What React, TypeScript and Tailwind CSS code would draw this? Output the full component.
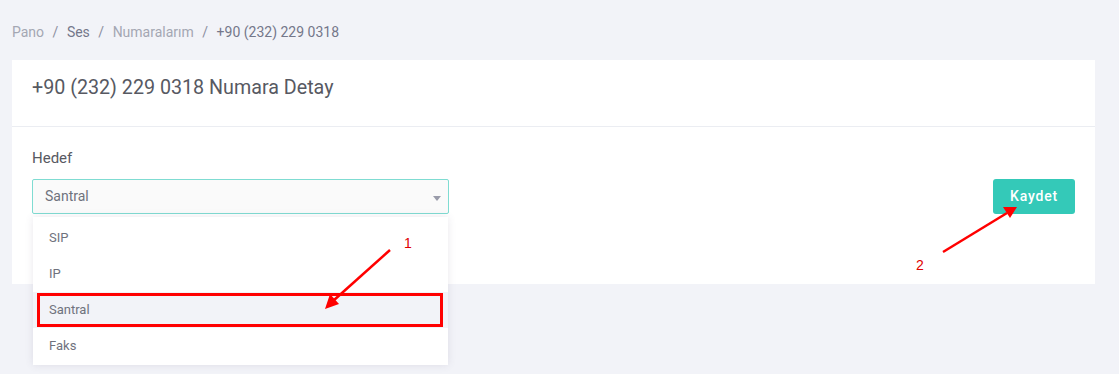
const options = ["SIP", "IP", "Santral", "Faks"];

export default function App() {
  return (
    <div className="relative min-h-[374px] bg-[#f2f3f8] pl-[12px] pr-[24px] font-['Roboto',sans-serif]">
      {/* Breadcrumb */}
      <div className="flex items-center pt-[23px] text-[14px] leading-[18px]">
        <span className="text-[#a4a7b3]">Pano</span>
        <span className="mx-[8.5px] text-[#8c8fa0]">/</span>
        <span className="text-[#74778a]">Ses</span>
        <span className="mx-[8.5px] text-[#8c8fa0]">/</span>
        <span className="text-[#a4a7b3]">Numaralarım</span>
        <span className="mx-[8.5px] text-[#8c8fa0]">/</span>
        <span className="text-[#74778a]">+90 (232) 229 0318</span>
      </div>

      {/* Card */}
      <div className="mt-[19px] bg-white">
        <div className="h-[67px] border-b border-[#ebedf2] px-[20px] pt-[16px]">
          <h3 className="text-[19.7px] leading-[24px] font-normal text-[#575962]">
            +90 (232) 229 0318 Numara Detay
          </h3>
        </div>

        <div className="flex items-start justify-between px-[20px] pt-[21px] pb-[70px]">
          <div className="relative">
            <label className="block text-[15px] leading-[20px] text-[#575962]">Hedef</label>
            <div className="relative mt-[11px] flex h-[35px] w-[417px] items-center rounded-[2px] border border-[#7fdcd2] bg-[#fafafa] px-[12px] text-[14px] text-[#6f727d]">
              Santral
              <span className="absolute right-[7px] top-[16px] h-0 w-0 border-x-[4px] border-t-[5px] border-x-transparent border-t-[#9a9caa]" />
            </div>

            {/* Dropdown */}
            <div className="absolute left-[1px] top-[69px] z-10 w-[415px] bg-white pt-[3px] pb-[1px] shadow-[0_0_8px_rgba(82,63,105,0.12)]">
              {options.map((o) => (
                <div
                  key={o}
                  className={`flex h-[36px] items-center px-[16px] text-[13px] text-[#6f727d] ${
                    o === "Santral" ? "bg-[#f2f3f8]" : ""
                  }`}
                >
                  {o}
                </div>
              ))}
            </div>
          </div>

          <button className="mt-[31px] h-[35px] w-[82px] rounded-[3px] bg-[#34c9b8] text-[14px] font-medium tracking-[0.8px] text-white">
            Kaydet
          </button>
        </div>
      </div>

      {/* Annotations */}
      <div className="pointer-events-none absolute left-[37px] top-[293px] z-20 h-[34px] w-[406px] border-[3px] border-[#ff0000]" />
      <svg className="pointer-events-none absolute left-0 top-0 z-30" width="1119" height="374">
        <line x1="390" y1="250" x2="333" y2="301" stroke="#ff0000" strokeWidth="2.5" />
        <polygon points="325,309 330,294 339,304" fill="#ff0000" />
        <line x1="943" y1="252" x2="1007" y2="213" stroke="#ff0000" strokeWidth="2.5" />
        <polygon points="1017,207 1003,207 1010,218" fill="#ff0000" />
        <text x="404" y="248" fill="#e00000" fontSize="14" fontFamily="Liberation Sans, sans-serif">1</text>
        <text x="916" y="270" fill="#e00000" fontSize="14" fontFamily="Liberation Sans, sans-serif">2</text>
      </svg>
    </div>
  );
}
